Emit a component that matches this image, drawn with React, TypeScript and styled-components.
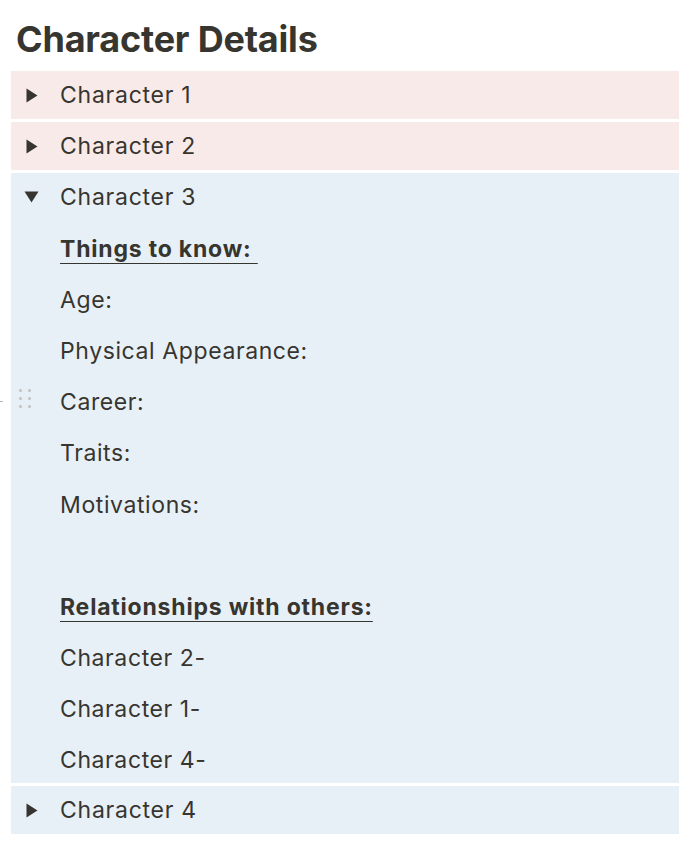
import React from 'react'
import styled, { createGlobalStyle } from 'styled-components'

const GlobalStyle = createGlobalStyle`
  html, body {
    margin: 0;
    padding: 0;
    background: #ffffff;
  }
  body {
    font-family: Inter, "Noto Sans", "Liberation Sans", sans-serif;
    color: #37352f;
    overflow: hidden;
  }
`

const Page = styled.div`
  padding-left: 11px;
  width: 700px;
`

const Title = styled.h1`
  margin: 0;
  padding: 17px 5px 10px;
  font-size: 36px;
  line-height: 44px;
  font-weight: 700;
  letter-spacing: -0.2px;
`

const Toggle = styled.div<{ tone: 'red' | 'blue' }>`
  position: relative;
  margin-bottom: 3px;
  background: ${({ tone }) => (tone === 'red' ? '#f9eaea' : '#e8f0f7')};
`

const Header = styled.div`
  display: flex;
  align-items: center;
  height: 48px;
`

const Arrow = styled.div`
  width: 49px;
  display: flex;
  justify-content: center;
  padding-right: 8px;
  box-sizing: border-box;
  & > svg {
    display: block;
  }
`

const Label = styled.span`
  font-size: 23px;
  letter-spacing: 0.75px;
  line-height: 50px;
`

const Children = styled.div`
  padding-left: 49px;
`

const Line = styled.div`
  position: relative;
  margin-top: 3.1px;
  height: 48px;
  font-size: 23px;
  letter-spacing: 0.6px;
  line-height: 50px;
`

const Heading = styled.span`
  font-weight: 700;
  letter-spacing: 0.8px;
  text-decoration: underline;
  text-decoration-thickness: 1px;
  text-underline-offset: 6px;
  white-space: pre;
`

const Handle = styled.div`
  position: absolute;
  left: -41px;
  top: 12px;
  display: grid;
  grid-template-columns: 3px 3px;
  column-gap: 6px;
  row-gap: 5px;
  & > i {
    width: 3px;
    height: 3px;
    border-radius: 50%;
    background: #c2c1be;
  }
`

const Tick = styled.div`
  position: absolute;
  left: -60px;
  top: 24px;
  width: 3px;
  height: 1px;
  background: #b9b8b5;
`

const RightTri = () => (
  <svg width="12" height="15" viewBox="0 0 12 15">
    <path d="M0.5 0.5 L11.5 7.5 L0.5 14.5 Z" fill="#37352f" />
  </svg>
)

const DownTri = () => (
  <svg width="15" height="12" viewBox="0 0 15 12">
    <path d="M0.5 0.5 L14.5 0.5 L7.5 11.5 Z" fill="#37352f" />
  </svg>
)

const ToggleRow: React.FC<{ label: string; open?: boolean }> = ({ label, open }) => (
  <Header>
    <Arrow>{open ? <DownTri /> : <RightTri />}</Arrow>
    <Label>{label}</Label>
  </Header>
)

export default function App() {
  return (
    <Page>
      <GlobalStyle />
      <Title>Character Details</Title>
      <Toggle tone="red">
        <ToggleRow label="Character 1" />
      </Toggle>
      <Toggle tone="red">
        <ToggleRow label="Character 2" />
      </Toggle>
      <Toggle tone="blue">
        <ToggleRow label="Character 3" open />
        <Children>
          <Line>
            <Heading>Things to know: </Heading>
          </Line>
          <Line>Age:</Line>
          <Line>Physical Appearance:</Line>
          <Line>
            <Tick />
            <Handle>
              <i />
              <i />
              <i />
              <i />
              <i />
              <i />
            </Handle>
            Career:
          </Line>
          <Line>Traits:</Line>
          <Line>Motivations:</Line>
          <Line />
          <Line>
            <Heading>Relationships with others:</Heading>
          </Line>
          <Line>Character 2-</Line>
          <Line>Character 1-</Line>
          <Line>Character 4-</Line>
        </Children>
      </Toggle>
      <Toggle tone="blue">
        <ToggleRow label="Character 4" />
      </Toggle>
    </Page>
  )
}
